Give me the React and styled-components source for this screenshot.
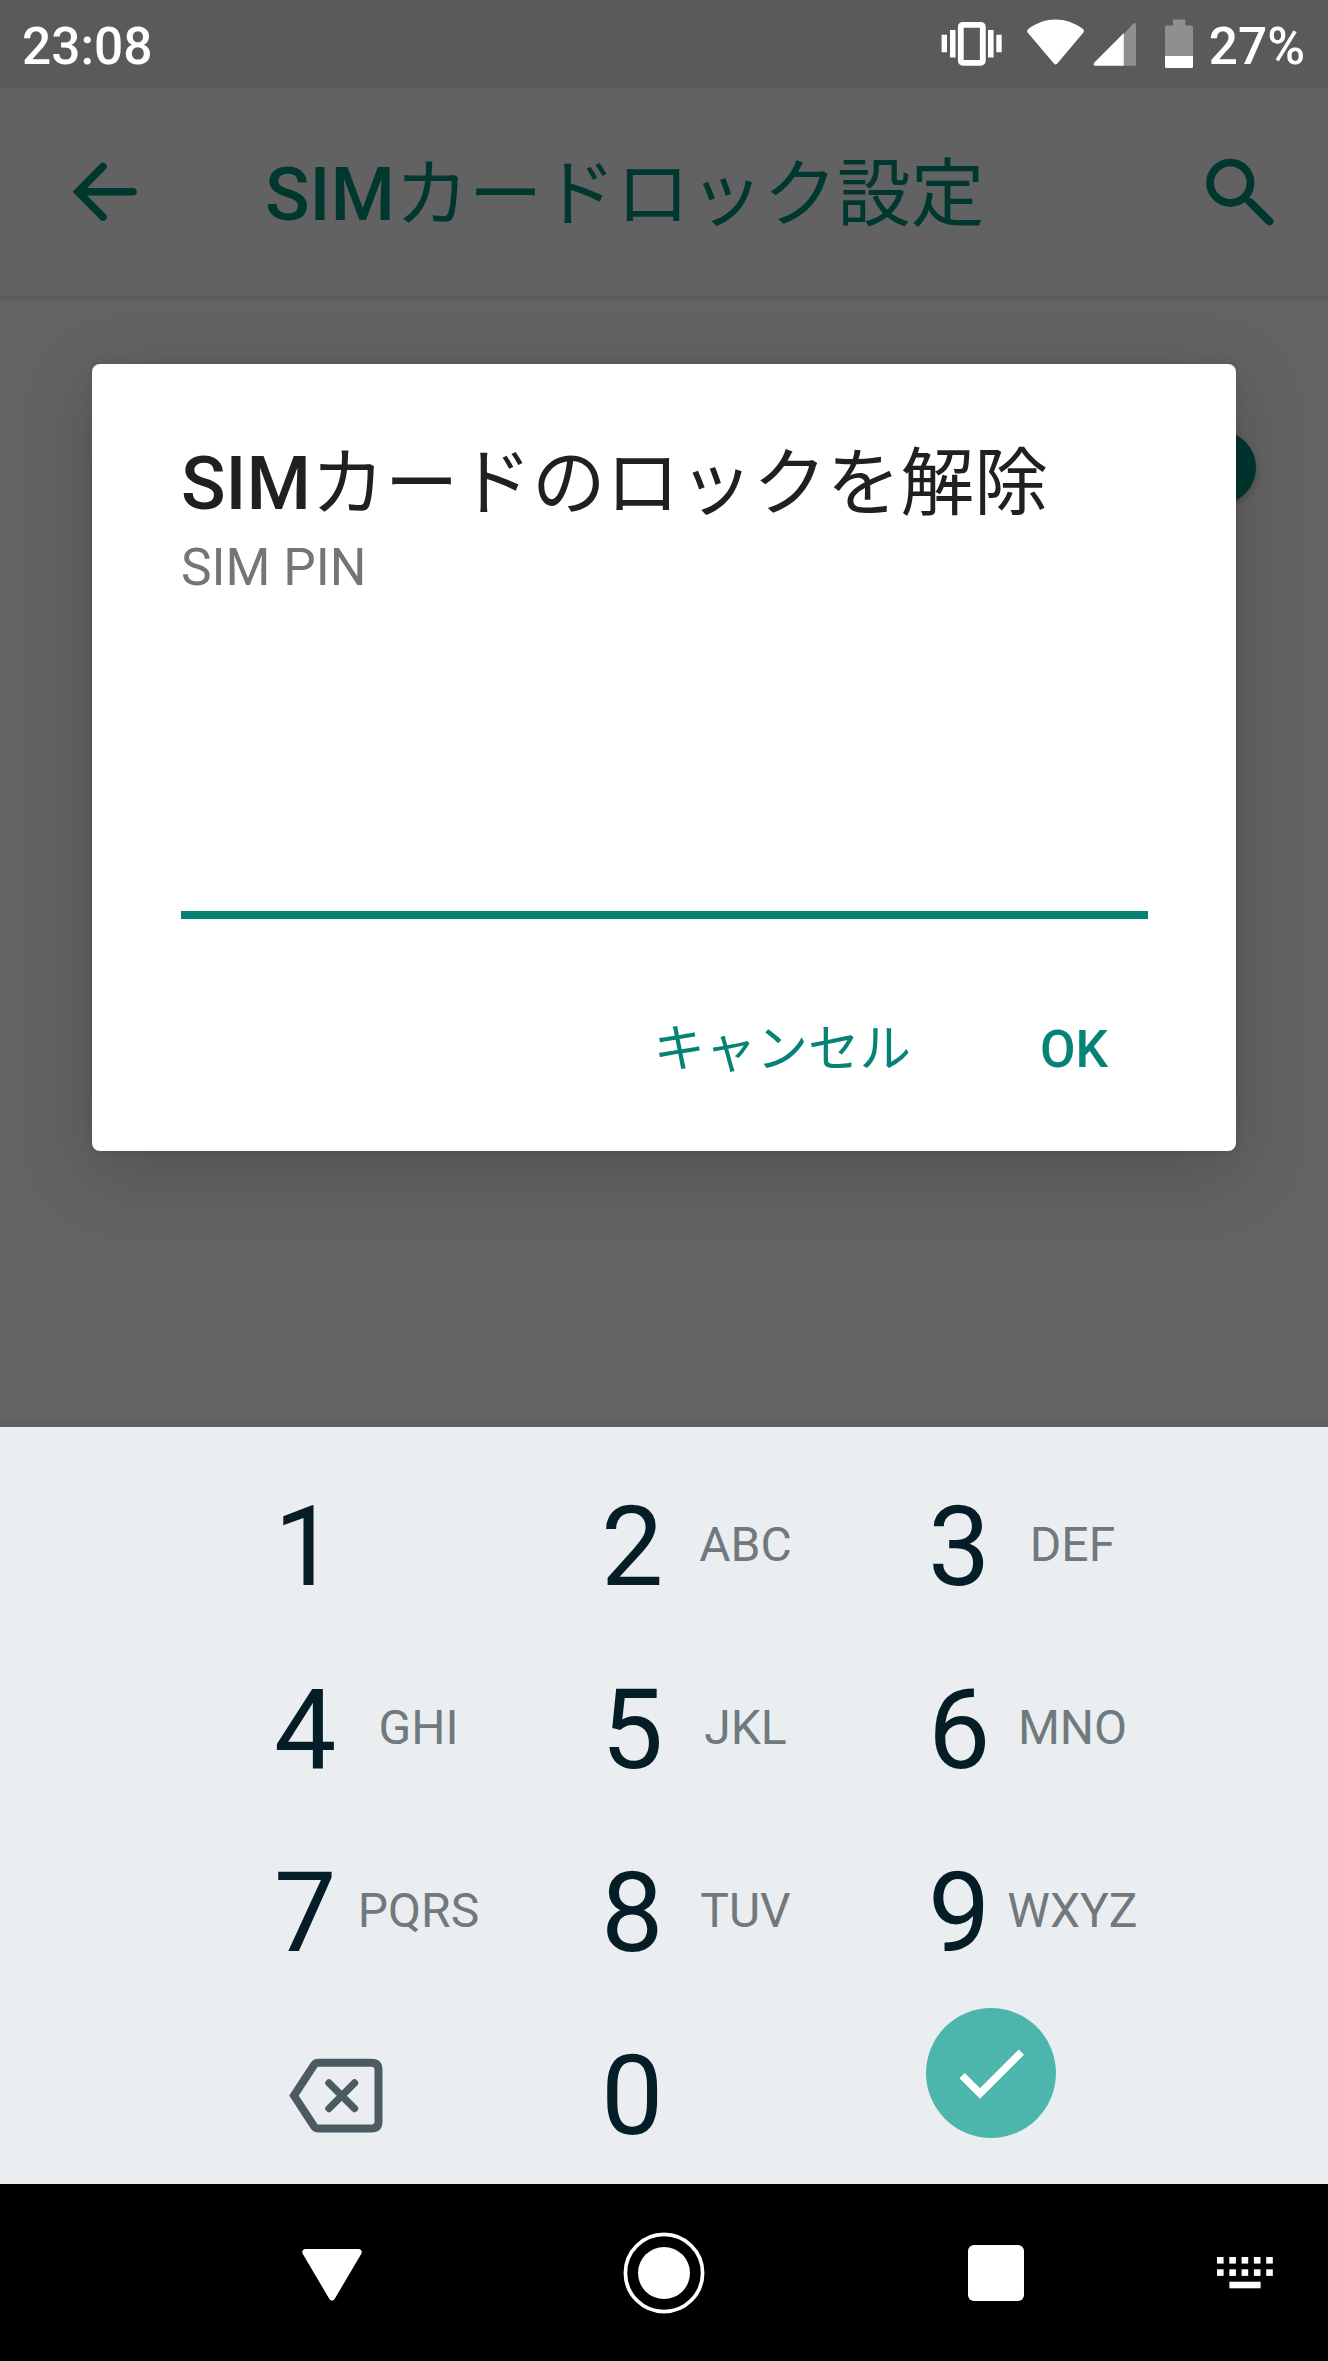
import { useState } from "react";
import { createGlobalStyle, styled } from "styled-components";

const GlobalStyle = createGlobalStyle`
  * {
    box-sizing: border-box;
  }

  body {
    margin: 0;
    background-color: #636363;
    font-family: Roboto, "Noto Sans CJK JP", sans-serif;
  }

  button {
    padding: 0;
    border: 0;
    background: none;
    color: inherit;
    font: inherit;
  }

  svg {
    display: block;
  }
`;

const Screen = styled.div`
  width: 1328px;
  height: 2361px;
  display: flex;
  flex-flow: column;
  overflow: hidden;
  background-color: #636363;
`;

const StatusBar = styled.header`
  height: 88px;
  flex: none;
  display: flex;
  justify-content: space-between;
  align-items: center;
  padding: 0 23px 0 22px;
  background-color: #5a5a5a;
  color: #fff;
`;

const StatusText = styled.span`
  padding-top: 5px;
  font-size: 51.4px;
  font-weight: 500;
  line-height: 60px;
`;

const StatusIcons = styled.div`
  display: flex;
  align-items: center;
`;

const IconSlot = styled.span`
  margin-right: ${(props) => props.$gap}px;
`;

const Toolbar = styled.div`
  height: 208px;
  flex: none;
  display: flex;
  align-items: center;
  padding: 0 50px 0 70px;
  background-color: #626262;
  color: #00382f;
`;

const ToolbarTitle = styled.h1`
  flex: 1;
  margin: 0 0 0 125px;
  padding-top: 6px;
  font-size: 73.7px;
  font-weight: 500;
  line-height: 98px;
  white-space: nowrap;
`;

const Content = styled.main`
  height: 1131px;
  flex: none;
  position: relative;
  background: linear-gradient(
    #5a5a5a,
    #5c5c5c 2px,
    #636363 7px,
    #636363 1121px,
    #5e5e5e
  );
`;

const PreferenceRow = styled.div`
  height: 342px;
  display: flex;
  justify-content: flex-end;
  align-items: center;
  padding-right: 72px;
`;

const Switch = styled.div`
  width: 130px;
  height: 50px;
  display: flex;
  justify-content: flex-end;
  align-items: center;
  border-radius: 25px;
  background-color: #4a5c59;
`;

const Thumb = styled.span`
  width: 73px;
  height: 73px;
  flex: none;
  border-radius: 50%;
  background-color: #00362f;
  box-shadow: 0 3px 6px rgba(0, 0, 0, 0.25);
`;

const Dialog = styled.form`
  position: absolute;
  top: 67.5px;
  left: 92px;
  width: 1144px;
  height: 787.5px;
  display: flex;
  flex-flow: column;
  padding: 71px 88px 0 89px;
  border-radius: 8px;
  background-color: #fff;
  box-shadow:
    0 20px 76px rgba(0, 0, 0, 0.18),
    0 0 8px rgba(0, 0, 0, 0.1);
`;

const DialogTitle = styled.h2`
  margin: 0;
  color: #202020;
  font-size: 73.7px;
  font-weight: 500;
  line-height: 98px;
  white-space: nowrap;
`;

const FieldLabel = styled.label`
  margin-top: 5px;
  color: #757575;
  font-size: 51.5px;
  line-height: 60px;
`;

const PinField = styled.input`
  height: 321px;
  margin: 0;
  padding: 0;
  border: 0;
  border-bottom: 8px solid #078375;
  border-radius: 0;
  outline: 0;
  background: none;
  color: #202020;
  font: inherit;
  font-size: 52px;
`;

const DialogActions = styled.div`
  display: flex;
  justify-content: flex-end;
  gap: 129px;
  margin: 101px 40px 0 0;
`;

const ActionButton = styled.button`
  color: #078375;
  font-size: 51.5px;
  font-weight: 500;
  line-height: 60px;
`;

const Cjk = styled.span`
  font-weight: 400;
`;

const Keyboard = styled.section`
  height: 757px;
  flex: none;
  display: grid;
  grid-template-columns: repeat(3, 327px);
  grid-template-rows: repeat(3, 183px) 179px;
  padding: 29px 0 0 274px;
  background-color: #ebeef1;
`;

const Key = styled.button`
  display: flex;
  align-items: flex-start;
`;

const Digit = styled.span`
  width: 63px;
  color: #041d26;
  font-size: 111px;
  line-height: 183px;
  text-align: left;
`;

const Letters = styled.span`
  width: 163px;
  color: #70797d;
  font-size: 48px;
  line-height: 177px;
  text-align: center;
`;

const BackspaceKey = styled.button`
  display: flex;
  padding: 52px 0 0 14px;
`;

const EnterKey = styled.button`
  width: 130px;
  height: 130px;
  display: grid;
  place-items: center;
  margin: 3px 0 0 -2px;
  border-radius: 50%;
  background-color: #4db6ac;
`;

const NavBar = styled.nav`
  flex: 1;
  display: grid;
  grid-template-columns: 166px repeat(3, 332px) 166px;
  align-items: center;
  justify-items: center;
  background-color: #000;
`;

const keys = [
  ["1", ""],
  ["2", "ABC"],
  ["3", "DEF"],
  ["4", "GHI"],
  ["5", "JKL"],
  ["6", "MNO"],
  ["7", "PQRS"],
  ["8", "TUV"],
  ["9", "WXYZ"],
];

const VibrateIcon = () => (
  <svg width="62" height="50" viewBox="940 20 62 50" fill="currentColor">
    <path d="M940.6 35.7h5.4v17.6h-5.4zM949 31h5.5v27.5H949zM987 31h5.6v27.5H987zM995.3 35.7h5.4v17.6h-5.4z" />
    <rect
      x="959.8"
      y="25.8"
      width="22"
      height="38"
      rx="2"
      fill="none"
      stroke="currentColor"
      strokeWidth="5.8"
    />
  </svg>
);

const WifiIcon = () => (
  <svg width="58" height="50" viewBox="1026 20 58 50" fill="currentColor">
    <path d="M1026.6 33.4Q1025.4 31.2 1027.6 29.8C1044 17.4 1065 17.4 1081.6 29.8Q1083.7 31.2 1082.4 33.4L1056.3 64.5Q1054.6 66.6 1052.9 64.5Z" />
  </svg>
);

const SignalIcon = () => (
  <svg width="44" height="50" viewBox="1092 20 44 50" fill="currentColor">
    <path
      d="M1122.7 35.2L1131.8 25Q1135 22.4 1135 26V66.7H1122.7Z"
      opacity="0.32"
    />
    <path d="M1122.8 34V66.7H1094.5Q1091.5 66.4 1093.4 63.6Z" />
  </svg>
);

const BatteryIcon = () => (
  <svg width="30" height="50" viewBox="1163 19 30 50" fill="currentColor">
    <path
      d="M1164 56V27Q1164 25.4 1165.6 25.4H1172V19.4H1184.5V25.4H1190.4Q1192 25.4 1192 27V56Z"
      opacity="0.32"
    />
    <path d="M1164 56H1192V66.4Q1192 68 1190.4 68H1165.6Q1164 68 1164 66.4Z" />
  </svg>
);

const BackIcon = () => (
  <svg width="70" height="66" viewBox="70 159 70 66" fill="none">
    <path
      d="M103 166.5L78 191.7L103 217M79 191.7H133"
      stroke="currentColor"
      strokeWidth="7.6"
      strokeLinecap="round"
    />
  </svg>
);

const SearchIcon = () => (
  <svg width="74" height="72" viewBox="1204 156 74 72" fill="none">
    <g stroke="currentColor">
      <circle cx="1230.3" cy="182.8" r="20.2" strokeWidth="7.8" />
      <path d="M1245 198L1250 203" strokeWidth="6.4" />
      <path d="M1250.5 202.5L1269.5 221.3" strokeWidth="8" strokeLinecap="round" />
    </g>
  </svg>
);

const BackspaceIcon = () => (
  <svg width="96" height="76" viewBox="288 2057 96 76" fill="none">
    <g stroke="#4b5b62" strokeWidth="8">
      <path d="M318 2062.7H371.5Q378.5 2062.7 378.5 2069.7V2121.5Q378.5 2128.5 371.5 2128.5H318Q315.6 2128.5 314 2126.2L294 2095.6L314 2065Q315.6 2062.7 318 2062.7Z" />
      <path
        d="M329 2083L354.5 2108.5M354.5 2083L329 2108.5"
        strokeWidth="7.4"
        strokeLinecap="round"
      />
    </g>
  </svg>
);

const CheckIcon = () => (
  <svg width="88" height="88" viewBox="0 0 24 24" fill="#fff">
    <path d="M9 16.17L4.83 12l-1.42 1.41L9 19 21 7l-1.41-1.41z" />
  </svg>
);

const NavBackIcon = () => (
  <svg width="60" height="56" viewBox="302 2246 60 56" fill="#fff">
    <path d="M305.5 2250H358.5Q363 2250.6 361.2 2255L334.6 2300Q332 2303.6 329.4 2300L302.8 2255Q301 2250.6 305.5 2250Z" />
  </svg>
);

const HomeIcon = () => (
  <svg width="82" height="82" viewBox="-41 -41 82 82">
    <circle r="38.6" fill="none" stroke="#fff" strokeWidth="3.7" />
    <circle r="26" fill="#fff" />
  </svg>
);

const RecentsIcon = () => (
  <svg width="56" height="56" viewBox="0 0 56 56" fill="#fff">
    <rect width="56" height="56" rx="6" />
  </svg>
);

const KeyboardIcon = () => (
  <svg width="56" height="32" viewBox="0 0 56 32" fill="#fff">
    {[0, 12.3].map((y) =>
      [0, 12.3, 24.6, 36.9, 49.2].map((x) => (
        <rect key={`${x}-${y}`} x={x} y={y} width="6.6" height="6.6" />
      )),
    )}
    <rect x="12.4" y="24.7" width="31.2" height="6.6" />
  </svg>
);

export default function App() {
  const [pin, setPin] = useState("");

  const erase = () => setPin(pin.slice(0, -1));

  return (
    <>
      <GlobalStyle />
      <Screen>
        <StatusBar>
          <StatusText>23:08</StatusText>
          <StatusIcons>
            <IconSlot $gap={24}>
              <VibrateIcon />
            </IconSlot>
            <IconSlot $gap={8}>
              <WifiIcon />
            </IconSlot>
            <IconSlot $gap={27}>
              <SignalIcon />
            </IconSlot>
            <IconSlot $gap={15}>
              <BatteryIcon />
            </IconSlot>
            <StatusText>27%</StatusText>
          </StatusIcons>
        </StatusBar>

        <Toolbar>
          <BackIcon />
          <ToolbarTitle>
            SIM<Cjk>カードロック設定</Cjk>
          </ToolbarTitle>
          <SearchIcon />
        </Toolbar>

        <Content>
          <PreferenceRow>
            <Switch>
              <Thumb />
            </Switch>
          </PreferenceRow>

          <Dialog onSubmit={(event) => event.preventDefault()}>
            <DialogTitle>
              SIM<Cjk>カードのロックを解除</Cjk>
            </DialogTitle>
            <FieldLabel htmlFor="pin">SIM PIN</FieldLabel>
            <PinField
              id="pin"
              type="password"
              value={pin}
              onChange={(event) => setPin(event.target.value)}
            />
            <DialogActions>
              <ActionButton type="button">
                <Cjk>キャンセル</Cjk>
              </ActionButton>
              <ActionButton type="submit">OK</ActionButton>
            </DialogActions>
          </Dialog>
        </Content>

        <Keyboard>
          {keys.map(([digit, letters]) => (
            <Key key={digit} type="button" onClick={() => setPin(pin + digit)}>
              <Digit>{digit}</Digit>
              <Letters>{letters}</Letters>
            </Key>
          ))}
          <BackspaceKey type="button" onClick={erase}>
            <BackspaceIcon />
          </BackspaceKey>
          <Key type="button" onClick={() => setPin(pin + "0")}>
            <Digit>0</Digit>
          </Key>
          <EnterKey type="button">
            <CheckIcon />
          </EnterKey>
        </Keyboard>

        <NavBar>
          <span />
          <NavBackIcon />
          <HomeIcon />
          <RecentsIcon />
          <KeyboardIcon />
        </NavBar>
      </Screen>
    </>
  );
}
